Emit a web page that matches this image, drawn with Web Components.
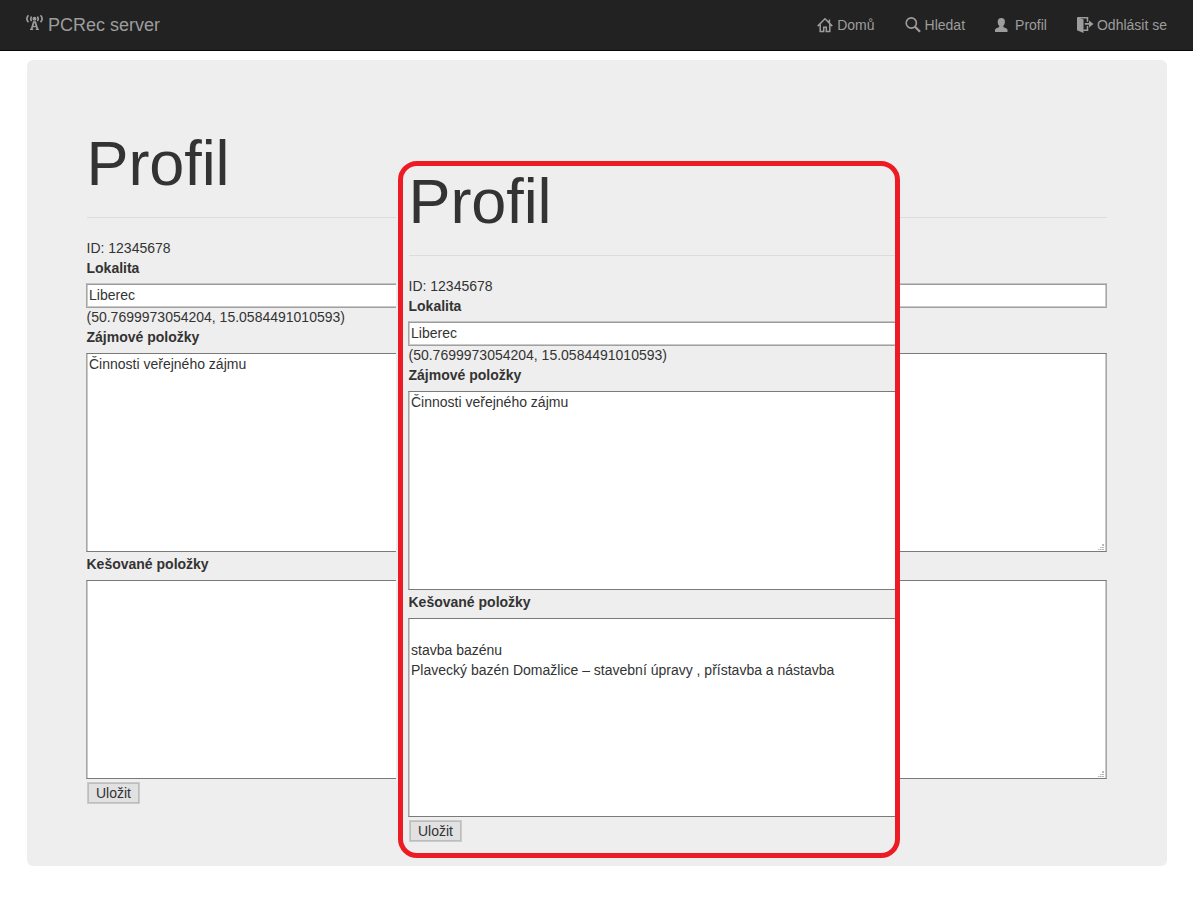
<!DOCTYPE html>
<html lang="cs">
<head>
<meta charset="utf-8">
<title>PCRec server – Profil</title>
<style>
html, body { margin: 0; background: #fff; }
body { font: 14px/20px "Liberation Sans", Arial, sans-serif; color: #333; height: 897px; overflow: hidden; }
</style>
</head>
<body>
<pc-navbar>
  <pc-brand slot="brand">PCRec server</pc-brand>
  <pc-link icon="home">Domů</pc-link>
  <pc-link icon="search">Hledat</pc-link>
  <pc-link icon="user">Profil</pc-link>
  <pc-link icon="logout">Odhlásit se</pc-link>
</pc-navbar>
<pc-jumbotron>
  <pc-profile></pc-profile>
  <pc-callout slot="over">
    <pc-profile><span slot="cached"><br>stavba bazénu<br>Plavecký bazén Domažlice – stavební úpravy , přístavba a nástavba</span></pc-profile>
  </pc-callout>
</pc-jumbotron>
<script>
const ICONS = {
  antenna: '<circle cx="8.500" cy="3.800" r="2"/><path d="M7 6.200h3l2.200 7.600h.8V15H9.800v-1.200h.6l-.4-1.500H7l-.4 1.500h.6V15H4v-1.200h.8zM8.500 7.600l-1 3.300h2z" fill-rule="evenodd"/><path d="M5.500 1.500q-1.500 2.300 0 4.600M11.500 1.500q1.500 2.300 0 4.600M2.500.3q-3.200 3.500 0 7M14.500.3q3.200 3.500 0 7" fill="none" stroke="currentColor" stroke-width="1.600"/>',
  home: '<path d="M.7 9.100 8 1.700l7.300 7.400M3.200 7.200v7.300h3.500v-4.200h2.600v4.200h3.500V7.200M12.400 6V2.400" fill="none" stroke="currentColor" stroke-width="1.500"/>',
  search: '<circle cx="6.300" cy="6" r="5.100" fill="none" stroke="currentColor" stroke-width="1.600"/><path d="m10 9.700 5 5" stroke="currentColor" stroke-width="2.300"/>',
  user: '<path d="M6.300 1.100c2.500 0 3.700 1.400 3.600 3.700 0 1.800-.6 3.200-1.600 4.100v1.200l3.200 1.500c.7.4 1 .8 1 1.500V15H0v-1.900c0-.7.3-1.100 1-1.500l3.200-1.500V8.900C3.200 8 2.700 6.600 2.700 4.800c0-2.300 1.200-3.700 3.600-3.700z"/>',
  logout: '<path d="M0 .2h1.200L6.500 2.400V16L0 13.200z"/><path d="M.8.8h9.700v4M10.500 9v4.300H6.300" fill="none" stroke="currentColor" stroke-width="1.500"/><path d="M7.800 6h4.200V3.400L16.500 6.900l-4.500 3.500V7.800H7.800z"/>'
};

function define(name, html, setup) {
  const template = document.createElement('template');
  template.innerHTML = html;
  customElements.define(name, class extends HTMLElement {
    constructor() {
      super();
      this.attachShadow({ mode: 'open' }).append(template.content.cloneNode(true));
    }
    connectedCallback() { if (setup) setup(this, this.shadowRoot); }
  });
}

define('pc-navbar', `
<style>
:host { display: flex; justify-content: space-between; box-sizing: border-box; height: 51px; padding: 15px 26px 0 26px; background: #222; border-bottom: 1px solid #080808; color: #9d9d9d; }
nav { display: flex; gap: 30px; }
</style>
<slot name="brand"></slot><nav><slot></slot></nav>`);

define('pc-brand', `
<style>
:host { display: flex; gap: 5px; font-size: 18px; line-height: 20px; }
svg { width: 17px; height: 16px; fill: currentColor; overflow: visible; }
</style>
<svg viewBox="0 0 17 16">${ICONS.antenna}</svg><span><slot></slot></span>`);

define('pc-link', `
<style>
:host { display: flex; gap: 4px; line-height: 20px; white-space: nowrap; }
svg { width: 16px; height: 16px; margin-top: 2px; fill: currentColor; overflow: visible; }
</style>
<svg viewBox="0 0 16 16"></svg><span><slot></slot></span>`,
(el, root) => { root.querySelector('svg').innerHTML = ICONS[el.getAttribute('icon')]; });

define('pc-jumbotron', `
<style>
:host { display: block; position: relative; box-sizing: border-box; height: 806px; margin: 9px 26px 0 27px; padding: 69px 60px 0; background: #eee; border-radius: 6px; }
</style>
<slot></slot><slot name="over"></slot>`);

/* Framed detail that floats over the page and clips the wide form inside it. */
define('pc-callout', `
<style>
:host { display: block; position: absolute; left: 369px; top: 101px; width: 504px; height: 697px; background: #eee; border-radius: 0 18px 18px 0; }
.frame { box-sizing: border-box; height: 697px; margin-left: 2px; border: 5px solid #ed1c24; border-radius: 19px; overflow: hidden; }
.page { width: 1020px; padding: 1px 0 0 6px; }
</style>
<div class="frame"><div class="page"><slot></slot></div></div>`);

define('pc-field', `
<style>
:host { display: block; position: relative; box-sizing: border-box; margin-left: -1px; background: #fff; border: 1px solid #a2a2a2; padding: 1px 2px; }
:host([kind="line"]) { height: 25px; border-color: #c4c4c4 #a6a6a6 #a0a0a0 #a6a6a6; box-shadow: inset 0 1px #9c9c9c, inset 0 -1px #cacaca, inset 1px 0 #cacaca, inset -1px 0 #cacaca; }
:host([kind="area"]) { height: 199px; border-color: #7a7a7a #a6a6a6; box-shadow: inset 1px 0 #cacaca, inset -1px 0 #cacaca; }
:host(.interest) { padding-top: 0; }
svg { display: none; position: absolute; right: 2px; bottom: 0; width: 6px; height: 7px; fill: #b8b8b8; }
:host([kind="area"]) svg { display: block; }
</style>
<slot></slot><svg viewBox="0 0 6 7"><path d="M4 0h2v2H4zM2 3h1.700v1H2zM4 3h2v1H4zM0 5h1.700v1H0zM2 5h1.700v1H2zM4 5h2v1H4z"/></svg>`);

define('pc-button', `
<style>
:host { display: block; box-sizing: border-box; width: 53px; height: 22px; background: #e1e1e1; border: 1px solid #cacaca; box-shadow: inset 0 0 0 1px #bdbdbd; text-align: center; line-height: 20px; }
</style>
<slot></slot>`);

define('pc-profile', `
<style>
:host { display: block; }
h1 { margin: 0 0 0 -0.5px; font-size: 63px; line-height: 69px; font-weight: 500; letter-spacing: -0.1px; }
hr { height: 0; margin: 19px 0 20px; border: 0; border-top: 1px solid #dcdcdc; }
.text, .label { margin-left: -0.5px; }
.label { font-weight: bold; }
.label + pc-field { margin-top: 6px; }
.label + pc-field[kind="line"] { margin-top: 5px; margin-bottom: -1px; }
.last { margin-top: 2px; }
pc-button { margin-top: 3px; }
</style>
<h1>Profil</h1>
<hr>
<div class="text">ID: 12345678</div>
<div class="label">Lokalita</div>
<pc-field kind="line">Liberec</pc-field>
<div class="text">(50.7699973054204, 15.0584491010593)</div>
<div class="label">Zájmové položky</div>
<pc-field kind="area" class="interest">Činnosti veřejného zájmu</pc-field>
<div class="label last">Kešované položky</div>
<pc-field kind="area"><slot name="cached"></slot></pc-field>
<pc-button>Uložit</pc-button>`);
</script>
</body>
</html>
